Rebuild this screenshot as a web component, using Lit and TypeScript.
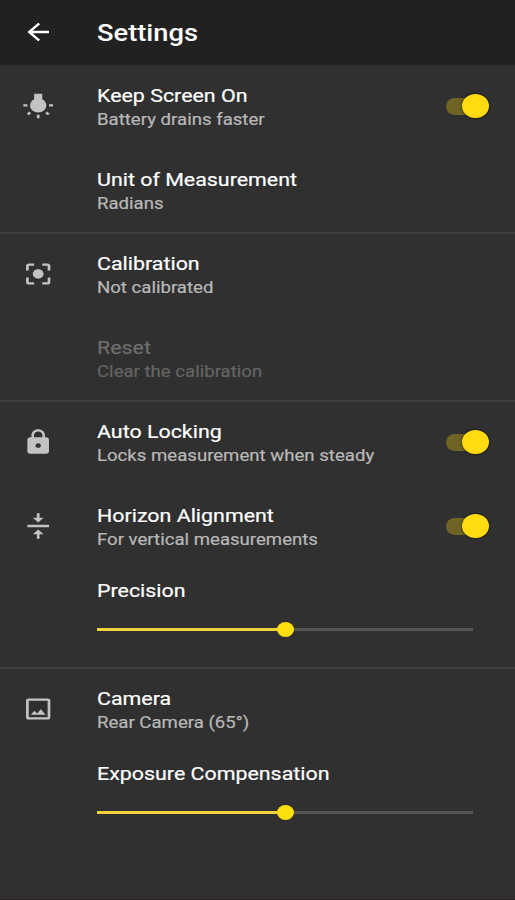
import { LitElement, html, css, nothing } from "lit";
import { customElement, property } from "lit/decorators.js";

const ICONS: Record<string, string> = {
  back: "M20 11H7.83l5.59-5.59L12 4l-8 8 8 8 1.41-1.41L7.83 13H20v-2z",
  bulb: "M3.55 18.54l1.41 1.41 1.79-1.8-1.41-1.41-1.79 1.8zM11 22.45h2V19.5h-2v2.95zM4 10.5H1v2h3v-2zm11-4.19V1.5H9v4.81C7.21 7.35 6 9.28 6 11.5c0 3.31 2.69 6 6 6s6-2.69 6-6c0-2.22-1.21-4.15-3-5.19zm5 4.19v2h3v-2h-3zm-2.76 7.66l1.79 1.8 1.41-1.41-1.8-1.79-1.4 1.4z",
  focus: "M12 8c-2.21 0-4 1.79-4 4s1.79 4 4 4 4-1.79 4-4-1.79-4-4-4zm-7 7H3v4c0 1.1.9 2 2 2h4v-2H5v-4zM5 5h4V3H5c-1.1 0-2 .9-2 2v4h2V5zm14-2h-4v2h4v4h2V5c0-1.1-.9-2-2-2zm0 16h-4v2h4c1.1 0 2-.9 2-2v-4h-2v4z",
  lock: "M18 8h-1V6c0-2.76-2.24-5-5-5S7 3.24 7 6v2H6c-1.1 0-2 .9-2 2v10c0 1.1.9 2 2 2h12c1.1 0 2-.9 2-2V10c0-1.1-.9-2-2-2zm-6 9c-1.1 0-2-.9-2-2s.9-2 2-2 2 .9 2 2-.9 2-2 2zm3.1-9H8.9V6c0-1.71 1.39-3.1 3.1-3.1 1.71 0 3.1 1.39 3.1 3.1v2z",
  align: "M8 19h3v4h2v-4h3l-4-4-4 4zm8-14h-3V1h-2v4H8l4 4 4-4zM4 11v2h16v-2H4z",
  image: "M19 19H5V5h14M19 3H5a2 2 0 0 0-2 2v14a2 2 0 0 0 2 2h14a2 2 0 0 0 2-2V5a2 2 0 0 0-2-2M13.96 12.29l-2.75 3.54-1.96-2.36L6.5 17h11l-3.54-4.71z",
};

@customElement("ui-icon")
class UiIcon extends LitElement {
  @property() name = "";
  static styles = css`
    :host { display: block; width: 32.4px; height: 28px; }
    svg { display: block; width: 100%; height: 100%; fill: currentColor; }
  `;
  render() {
    return html`<svg viewBox="0 0 24 24" preserveAspectRatio="none"><path d=${ICONS[this.name]}></path></svg>`;
  }
}

@customElement("setting-row")
class SettingRow extends LitElement {
  @property() icon = "";
  @property() heading = "";
  @property() summary = "";
  @property({ type: Boolean }) on = false;
  @property({ type: Boolean }) disabled = false;
  static styles = css`
    :host { display: flex; align-items: center; height: 84px; box-sizing: border-box; padding-right: 26px; }
    .lead { width: 97px; box-sizing: border-box; padding-left: 22px; flex: none; color: #c3c3c3; }
    .texts { flex: 1; min-width: 0; padding-top: 4px; }
    .heading, .summary { white-space: nowrap; transform-origin: 0 0; }
    .heading { font-size: 18.67px; line-height: 24px; color: #fff; transform: scaleX(1.147); -webkit-text-stroke: 0.2px; }
    .summary { font-size: 16.33px; line-height: 24px; color: #b8b8b8; transform: scaleX(1.139); -webkit-text-stroke: 0.2px; }
    .disabled .heading { color: #6e6e6e; }
    .disabled .summary { color: #646464; }
    .switch { flex: none; display: flex; align-items: center; justify-content: flex-end; width: 43px; height: 17px; border-radius: 9px; background: linear-gradient(#706425, #706425) 0 0 / 32px 17px no-repeat; }
    .thumb { width: 27px; height: 24px; border-radius: 50%; background: #ffdb10; box-shadow: 0 0 2px 1px rgba(0, 0, 0, 0.35); flex: none; }
  `;
  render() {
    return html`
      <div class="lead">${this.icon ? html`<ui-icon name=${this.icon}></ui-icon>` : nothing}</div>
      <div class="texts ${this.disabled ? "disabled" : ""}">
        <div class="heading">${this.heading}</div>
        <div class="summary">${this.summary}</div>
      </div>
      ${this.on ? html`<div class="switch"><div class="thumb"></div></div>` : nothing}
    `;
  }
}

@customElement("slider-row")
class SliderRow extends LitElement {
  @property() heading = "";
  @property({ type: Number }) value = 50;
  static styles = css`
    :host { display: block; height: 99px; box-sizing: border-box; padding: 11px 42px 0 97px; }
    .heading { font-size: 18.67px; line-height: 24px; color: #fff; white-space: nowrap; transform: scaleX(1.147); transform-origin: 0 0; -webkit-text-stroke: 0.2px; }
    .slider { display: flex; align-items: center; height: 15px; margin-top: 19px; }
    .fill, .rest { height: 3px; }
    .fill { background: #f0d23a; }
    .rest { flex: 1; background: #545454; }
    .thumb { width: 17px; height: 15px; margin: 0 -8.5px; border-radius: 50%; background: #ffe00c; flex: none; z-index: 1; }
  `;
  render() {
    return html`
      <div class="heading">${this.heading}</div>
      <div class="slider">
        <div class="fill" style="width:${this.value}%"></div>
        <div class="thumb"></div>
        <div class="rest"></div>
      </div>
    `;
  }
}

@customElement("app-root")
class AppRoot extends LitElement {
  static styles = css`
    :host { display: flex; flex-direction: column; height: 900px; box-sizing: border-box; overflow: hidden; background: #303030; border-bottom: 1px solid #231f22; font-family: Roboto, sans-serif; }
    header { display: flex; align-items: center; height: 64px; flex: none; background: #212121; color: #fff; box-shadow: 0 1px 0 #232323; }
    .nav { width: 97px; box-sizing: border-box; padding-left: 22px; flex: none; }
    h1 { margin: 0; padding-top: 2px; font-size: 23.33px; line-height: 28px; font-weight: 500; transform: scaleX(1.17); transform-origin: 0 0; }
    section + section { box-shadow: inset 0 2px 0 #404040; }
  `;
  render() {
    return html`
      <header>
        <div class="nav"><ui-icon name="back"></ui-icon></div>
        <h1>Settings</h1>
      </header>
      <section>
        <setting-row icon="bulb" heading="Keep Screen On" summary="Battery drains faster" on></setting-row>
        <setting-row heading="Unit of Measurement" summary="Radians"></setting-row>
      </section>
      <section>
        <setting-row icon="focus" heading="Calibration" summary="Not calibrated"></setting-row>
        <setting-row heading="Reset" summary="Clear the calibration" disabled></setting-row>
      </section>
      <section>
        <setting-row icon="lock" heading="Auto Locking" summary="Locks measurement when steady" on></setting-row>
        <setting-row icon="align" heading="Horizon Alignment" summary="For vertical measurements" on></setting-row>
        <slider-row heading="Precision"></slider-row>
      </section>
      <section>
        <setting-row icon="image" heading="Camera" summary="Rear Camera (65°)"></setting-row>
        <slider-row heading="Exposure Compensation"></slider-row>
      </section>
    `;
  }
}
